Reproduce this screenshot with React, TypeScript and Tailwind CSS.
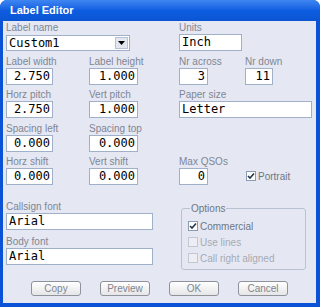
import { ReactNode } from "react";

const lbl = "h-[13px] leading-[13px] text-[10px] text-[#7f8693] whitespace-nowrap";
const box =
  "h-[17px] border border-[#9fb0c8] bg-white font-['DejaVu_Sans_Mono',monospace] text-[12px] leading-[15px] text-black whitespace-nowrap overflow-hidden";

function Field({ label, value, w, right, up }: { label: string; value: string; w: string; right?: boolean; up?: boolean }) {
  return (
    <div className={`flex flex-col ${up ? "-mt-[1px]" : ""}`}>
      <div className={lbl}>{label}</div>
      <div className={`${box} ${w} ${right ? "text-right pr-[2px]" : "pl-[2px]"}`}>{value}</div>
    </div>
  );
}

function Check({ checked, disabled, children }: { checked?: boolean; disabled?: boolean; children: ReactNode }) {
  return (
    <div className="flex items-center h-[16px]">
      <div
        className={`w-[10px] h-[10px] border flex items-center justify-center ${
          disabled ? "border-[#c2c8d2] bg-[#eceef3]" : "border-[#8a9bb4] bg-white"
        }`}
      >
        {checked && (
          <svg width="8" height="8" viewBox="0 0 8 8">
            <path d="M1 4 L3 6 L7 1.5" fill="none" stroke="#233648" strokeWidth="1.6" />
          </svg>
        )}
      </div>
      <span className={`ml-[2px] text-[10px] ${disabled ? "text-[#a6abb4]" : "text-[#6f7682]"}`}>{children}</span>
    </div>
  );
}

function Btn({ children }: { children: ReactNode }) {
  return (
    <div className="w-[50px] h-[15px] rounded-[3px] border border-[#8d929b] bg-gradient-to-b from-white to-[#e6e6e8] flex items-center justify-center text-[10px] text-[#7f858e]">
      {children}
    </div>
  );
}

export default function App() {
  return (
    <div className="w-[320px] h-[307px] bg-white font-['Liberation_Sans',Arial,sans-serif]">
      <div className="w-full h-full rounded-t-[7px] bg-[#0a53d6] flex flex-col overflow-hidden">
        <div className="h-[21px] shrink-0 bg-gradient-to-b from-[#3f86f2] via-[#0e5de0] to-[#0a55d3] pl-[10px] flex items-center text-white font-bold text-[11px]">
          Label Editor
        </div>
        <div className="flex-1 ml-[3px] mr-[4px] mb-[4px] bg-[#e5e8f3] flex flex-col">
          <div className="grid grid-cols-[83px_90px_66px_1fr] gap-y-[4px] pl-[3px]">
            {/* row 1 */}
            <div className="col-span-2 flex flex-col">
              <div className={lbl}>Label name</div>
              <div className="h-[16px] w-[124px] mt-[1px] border border-[#9fb0c8] bg-white flex items-center">
                <span className="flex-1 pl-[2px] font-['DejaVu_Sans_Mono',monospace] text-[12px] leading-[14px]">Custom1</span>
                <div className="w-[13px] h-[12px] mr-[1px] border border-[#b7c2d4] bg-[#e3e7ef] flex items-center justify-center">
                  <svg width="7" height="4" viewBox="0 0 7 4">
                    <path d="M0 0 H7 L3.5 4 Z" fill="#000" />
                  </svg>
                </div>
              </div>
            </div>
            <div className="col-span-2">
              <Field label="Units" value="Inch" w="w-[63px]" />
            </div>
            {/* row 2 */}
            <Field label="Label width" value="2.750" w="w-[47px]" right />
            <Field label="Label height" value="1.000" w="w-[49px]" right />
            <Field label="Nr across" value="3" w="w-[29px]" right />
            <Field label="Nr down" value="11" w="w-[28px]" right />
            {/* row 3 */}
            <Field label="Horz pitch" value="2.750" w="w-[47px]" right up />
            <Field label="Vert pitch" value="1.000" w="w-[49px]" right up />
            <div className="col-span-2 -mt-[1px]">
              <Field label="Paper size" value="Letter" w="w-[133px]" />
            </div>
            {/* row 4 */}
            <Field label="Spacing left" value="0.000" w="w-[47px]" right />
            <Field label="Spacing top" value="0.000" w="w-[49px]" right />
            <div className="col-span-2" />
            {/* row 5 */}
            <Field label="Horz shift" value="0.000" w="w-[47px]" right up />
            <Field label="Vert shift" value="0.000" w="w-[49px]" right up />
            <Field label="Max QSOs" value="0" w="w-[29px]" right up />
            <div className="flex items-end pb-[1px] pl-[1px] -mt-[1px]">
              <Check checked>Portrait</Check>
            </div>
          </div>

          <div className="grid grid-cols-[173px_1fr] pl-[3px] mt-[15px]">
            <div className="flex flex-col gap-[5px]">
              <div className="flex flex-col">
                <div className={lbl}>Callsign font</div>
                <div className={`${box} h-[16px] w-[147px] pl-[2px]`}>Arial</div>
              </div>
              <div className="flex flex-col">
                <div className={lbl}>Body font</div>
                <div className={`${box} h-[16px] w-[147px] pl-[2px]`}>Arial</div>
              </div>
            </div>
            <fieldset className="ml-[2px] mt-[2px] w-[125px] h-[68px] border border-[#b9c2d3] rounded-[3px] pl-[6px] pt-[3px]">
              <legend className="ml-[2px] px-[1px] text-[10px] leading-[13px] text-[#6f7682]">Options</legend>
              <Check checked>Commercial</Check>
              <Check disabled>Use lines</Check>
              <Check disabled>Call right aligned</Check>
            </fieldset>
          </div>

          <div className="flex gap-[19px] pl-[28px] mt-[11px]">
            <Btn>Copy</Btn>
            <Btn>Preview</Btn>
            <Btn>OK</Btn>
            <Btn>Cancel</Btn>
          </div>
        </div>
      </div>
    </div>
  );
}
